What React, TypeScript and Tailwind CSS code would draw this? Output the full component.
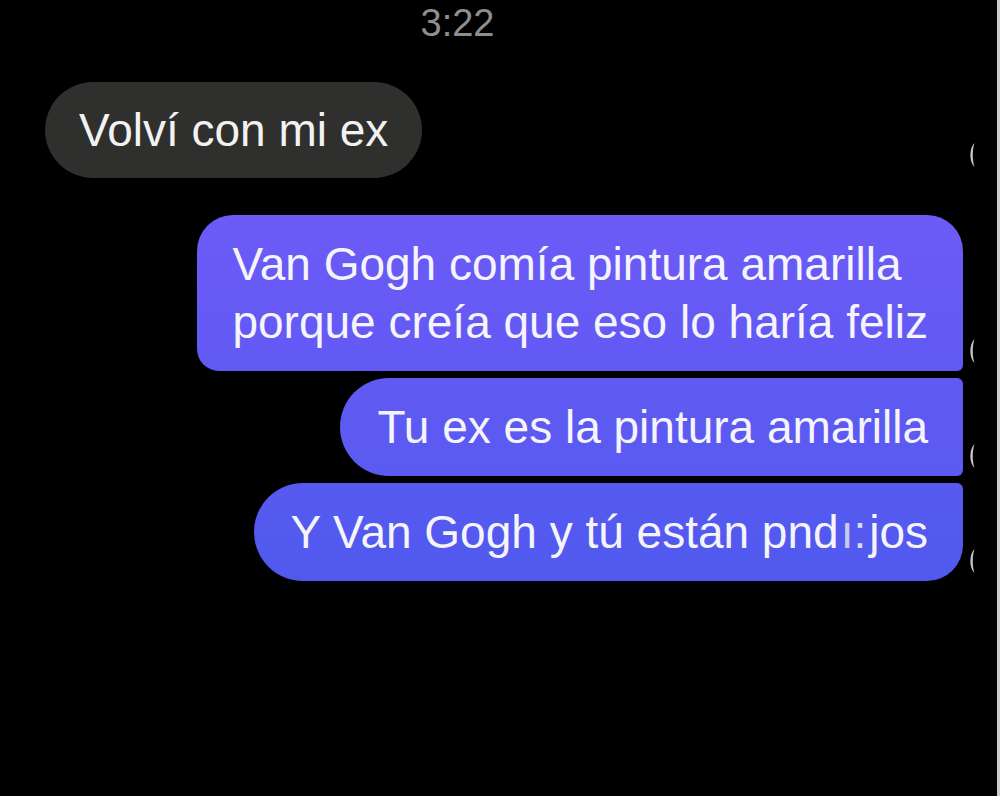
import type { ReactNode } from "react";

const Receipt = () => (
  <svg width="8" height="26" viewBox="0 0 8 26" className="shrink-0">
    <path d="M6.5 1 C1 6, 1 20, 6.5 25 C4.2 18, 4.2 8, 6.5 1 Z" fill="#c8c8c8" />
  </svg>
);

type BubbleProps = {
  className: string;
  children: ReactNode;
  receiptGap?: string;
};

const OutgoingRow = ({ className, children, receiptGap = "mb-[7px]" }: BubbleProps) => {
  return (
    <div className="flex items-end justify-end">
      <div
        className={`py-[20px] pr-[35px] text-[46px] leading-[58px] text-[#f4f4fa] ${className}`}
      >
        {children}
      </div>
      <div className={`flex w-[34px] pl-[5px] ${receiptGap}`}>
        <Receipt />
      </div>
    </div>
  );
};

export default function App() {
  return (
    <div
      className="h-[796px] w-[1000px] overflow-hidden border-r-[3px] border-[#cdcdcd] bg-black"
      style={{ fontFamily: '"Liberation Sans", Arial, sans-serif' }}
    >
      {/* status time */}
      <div className="flex justify-center pr-[82px] pt-[2px]">
        <p className="text-[38px] leading-[42px] text-[#8e8e8e]">3:22</p>
      </div>

      {/* incoming */}
      <div className="mt-[38px] flex items-end justify-between pl-[45px]">
        <div className="rounded-full bg-[#2f302d] px-[34px] py-[19px] text-[46px] leading-[58px] text-[#f2f2f2]">
          Volví con mi ex
        </div>
        <div className="mb-[10px] flex w-[34px] pl-[5px]">
          <Receipt />
        </div>
      </div>

      {/* outgoing group */}
      <div className="mt-[37px] flex flex-col gap-[7px]">
        <OutgoingRow className="rounded-tl-[36px] rounded-tr-[36px] rounded-br-[6px] rounded-bl-[22px] bg-linear-to-b from-[#6c5bf7] to-[#6259f4] pl-[35px]">
          <span className="block">Van Gogh comía pintura amarilla</span>
          <span className="block">porque creía que eso lo haría feliz</span>
        </OutgoingRow>
        <OutgoingRow className="rounded-l-[49px] rounded-r-[6px] bg-linear-to-b from-[#5f5af3] to-[#5a5af1] pl-[37px]">
          Tu ex es la pintura amarilla
        </OutgoingRow>
        <OutgoingRow className="rounded-l-[49px] rounded-tr-[6px] rounded-br-[36px] bg-linear-to-b from-[#575af0] to-[#5059ee] pl-[36px]">
          Y Van Gogh y tú están pnd
          <span className="ml-[2px] text-[#c9c9ee]">ı</span>
          <span className="mr-[3px] text-[#dcdcf4]">:</span>jos
        </OutgoingRow>
      </div>
    </div>
  );
}
